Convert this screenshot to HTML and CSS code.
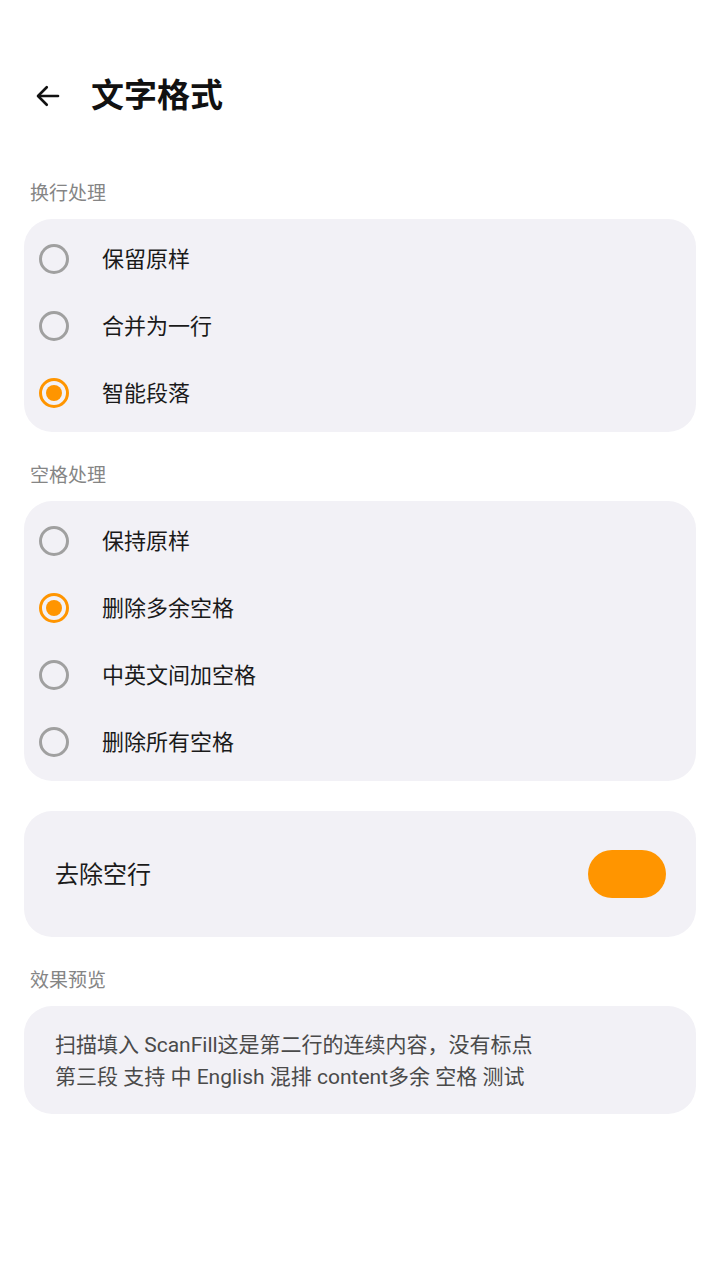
FILE: index.html
```html
<!DOCTYPE html>
<html lang="zh-CN">
<head>
<meta charset="utf-8">
<title>文字格式</title>
<link rel="stylesheet" href="styles.css">
</head>
<body>
<div class="page">
  <header class="header">
    <div class="back">
      <svg width="30" height="30" viewBox="0 0 24 24" fill="none" stroke="#111" stroke-width="2.1" stroke-linecap="round" stroke-linejoin="round"><path d="M20 12H4.5"/><path d="M11 5l-7 7 7 7"/></svg>
    </div>
    <h1 class="title">文字格式</h1>
  </header>

  <div class="label">换行处理</div>
  <div class="card list">
    <div class="row"><span class="radio"></span><span class="text">保留原样</span></div>
    <div class="row"><span class="radio"></span><span class="text">合并为一行</span></div>
    <div class="row"><span class="radio on"></span><span class="text">智能段落</span></div>
  </div>

  <div class="label">空格处理</div>
  <div class="card list">
    <div class="row"><span class="radio"></span><span class="text">保持原样</span></div>
    <div class="row"><span class="radio on"></span><span class="text">删除多余空格</span></div>
    <div class="row"><span class="radio"></span><span class="text">中英文间加空格</span></div>
    <div class="row"><span class="radio"></span><span class="text">删除所有空格</span></div>
  </div>

  <div class="card switch-card">
    <span class="text">去除空行</span>
    <span class="toggle"></span>
  </div>

  <div class="label">效果预览</div>
  <div class="card preview">扫描填入 ScanFill这是第二行的连续内容，没有标点<br>第三段 支持 中 English 混排 content多余 空格 测试</div>
</div>
</body>
</html>
```

FILE: styles.css
```css
* { box-sizing: border-box; }
html, body { margin: 0; padding: 0; background: #fff; }
body {
  font-family: Roboto, "Noto Sans CJK SC", "Noto Sans", sans-serif;
  color: #1a1a1a;
}
.page { width: 720px; padding: 0 24px; }
.header {
  display: flex;
  align-items: center;
  height: 48px;
  margin-top: 72px;
  margin-bottom: 30px;
}
.back {
  width: 48px; height: 48px;
  display: flex; align-items: center; justify-content: center;
}
.title {
  margin: 0 0 0 19px;
  font-size: 33px;
  font-weight: 700;
  line-height: 48px;
  color: #111;
}
.label {
  font-size: 19px;
  line-height: 26px;
  color: #858585;
  padding: 31px 6px 12px;
}
.card {
  background: #f2f1f6;
  border-radius: 28px;
}
.list { padding: 6px 15px; }
.row {
  height: 67px;
  display: flex;
  align-items: center;
}
.radio {
  width: 30px; height: 30px;
  border-radius: 50%;
  border: 3px solid #a0a0a0;
  display: flex; align-items: center; justify-content: center;
  flex: none;
}
.radio.on { border-color: #ff9500; }
.radio.on::after {
  content: "";
  width: 16px; height: 16px;
  border-radius: 50%;
  background: #ff9500;
}
.text {
  font-size: 22px;
  color: #1a1a1a;
  margin-left: 33px;
  padding-bottom: 4px;
}
.switch-card {
  margin-top: 30px;
  height: 126px;
  display: flex;
  align-items: center;
  justify-content: space-between;
  padding: 0 30px 0 31px;
}
.switch-card .text { margin-left: 0; font-size: 24px; }
.toggle {
  width: 78px; height: 48px;
  border-radius: 24px;
  background: #ff9500;
}
.preview {
  padding: 23px 30px 21px 31px;
  font-size: 21px;
  line-height: 32px;
  color: #4a4a4a;
}
```
